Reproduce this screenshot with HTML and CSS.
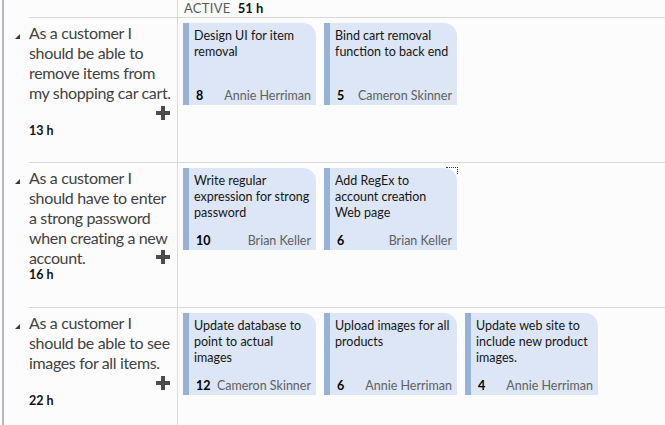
FILE: index.html
```html
<!DOCTYPE html>
<html>
<head>
<meta charset="utf-8">
<link rel="stylesheet" href="styles.css">
</head>
<body>
<div class="board">
  <div class="row header">
    <div class="gutter"></div>
    <div class="story"></div>
    <div class="lane lane-head"><span class="state">ACTIVE</span><span class="total">51 h</span></div>
  </div>

  <div class="row">
    <div class="gutter"><span class="twisty"></span></div>
    <div class="story">
      <div class="story-title">As a customer I should be able to remove items from my shopping car cart.</div>
      <div class="story-add"><svg width="14" height="14" viewBox="0 0 14 14"><path d="M5 0h4v5h5v4H9v5H5V9H0V5h5z" fill="#4b4b4b"/></svg></div>
      <div class="story-hours">13 h</div>
    </div>
    <div class="lane">
      <div class="card"><div class="card-title">Design UI for item removal</div><div class="card-foot"><span class="card-est">8</span><span class="card-owner">Annie Herriman</span></div></div>
      <div class="card"><div class="card-title">Bind cart removal function to back end</div><div class="card-foot"><span class="card-est">5</span><span class="card-owner">Cameron Skinner</span></div></div>
    </div>
  </div>

  <div class="row">
    <div class="gutter"><span class="twisty"></span></div>
    <div class="story">
      <div class="story-title">As a customer I should have to enter a strong password when creating a new account.</div>
      <div class="story-add story-add--inline"><svg width="14" height="14" viewBox="0 0 14 14"><path d="M5 0h4v5h5v4H9v5H5V9H0V5h5z" fill="#4b4b4b"/></svg></div>
      <div class="story-hours">16 h</div>
    </div>
    <div class="lane">
      <div class="card"><div class="card-title">Write regular expression for strong password</div><div class="card-foot"><span class="card-est">10</span><span class="card-owner">Brian Keller</span></div></div>
      <div class="card card--focus"><div class="card-title">Add RegEx to account creation Web page</div><div class="card-foot"><span class="card-est">6</span><span class="card-owner">Brian Keller</span></div></div>
    </div>
  </div>

  <div class="row">
    <div class="gutter"><span class="twisty"></span></div>
    <div class="story">
      <div class="story-title">As a customer I should be able to see images for all items.</div>
      <div class="story-add"><svg width="14" height="14" viewBox="0 0 14 14"><path d="M5 0h4v5h5v4H9v5H5V9H0V5h5z" fill="#4b4b4b"/></svg></div>
      <div class="story-hours">22 h</div>
    </div>
    <div class="lane">
      <div class="card"><div class="card-title">Update database to point to actual images</div><div class="card-foot"><span class="card-est">12</span><span class="card-owner">Cameron Skinner</span></div></div>
      <div class="card"><div class="card-title">Upload images for all products</div><div class="card-foot"><span class="card-est">6</span><span class="card-owner">Annie Herriman</span></div></div>
      <div class="card"><div class="card-title">Update web site to include new product images.</div><div class="card-foot"><span class="card-est">4</span><span class="card-owner">Annie Herriman</span></div></div>
    </div>
  </div>
</div>
</body>
</html>
```

FILE: styles.css
```css
html, body {
  margin: 0;
  padding: 0;
  background: #fcfcfc;
  height: 100%;
  overflow: hidden;
}
body {
  font-family: Lato, "Open Sans", sans-serif;
}
.board {
  margin-left: 2px;
  border-left: 2px solid #b3b8c3;
  min-height: 100%;
  display: flex;
  flex-direction: column;
}
.row {
  display: grid;
  grid-template-columns: 25px 149px 1fr;
  height: 145px;
}
.row.header {
  height: 18px;
}
.row:last-child {
  flex: 1;
}
.twisty {
  display: block;
  width: 0;
  height: 0;
  margin: 16px 0 0 11px;
  border-style: solid;
  border-width: 0 0 5px 5px;
  border-color: transparent transparent #3a3a3a transparent;
}
.story {
  border-right: 1px solid #d9d9d9;
  border-bottom: 1px solid #d9d9d9;
  padding: 5px 0 0 0;
  color: #424242;
}
.lane {
  border-bottom: 1px solid #d9d9d9;
  display: flex;
  gap: 8px;
  padding: 5px 0 0 5px;
  align-items: flex-start;
}
.lane-head {
  padding: 0 0 0 6px;
  align-items: center;
  gap: 7px;
  font-size: 13px;
  line-height: 17px;
}
.state {
  color: #5a5a5a;
  letter-spacing: 0.3px;
}
.total {
  font-weight: bold;
  color: #111;
}
.row:last-child .story,
.row:last-child .lane {
  border-bottom: none;
}
.story-title {
  font-size: 16px;
  line-height: 20px;
  letter-spacing: -0.35px;
  padding-right: 2px;
}
.story-add {
  display: flex;
  justify-content: flex-end;
  align-items: center;
  height: 18px;
  padding-right: 7px;
  margin-top: 1px;
}
.story-add--inline {
  margin-top: -20px;
}
.story-hours {
  font-size: 12.5px;
  font-weight: bold;
  color: #111;
  line-height: 18px;
}
.card {
  position: relative;
  box-sizing: border-box;
  width: 133px;
  height: 82px;
  background: #dce6f6;
  border-left: 6px solid #97b2d8;
  border-top-right-radius: 13px;
  padding: 5px 5px 1px 5px;
  display: flex;
  flex-direction: column;
}
.card-title {
  font-size: 12.5px;
  line-height: 16px;
  color: #151515;
}
.card-foot {
  margin-top: auto;
  display: flex;
  justify-content: space-between;
  align-items: baseline;
  font-size: 12.5px;
  line-height: 16px;
  padding-left: 2px;
}
.card-est {
  font-weight: bold;
  color: #000;
}
.card-owner {
  color: #606060;
}
.card--focus::after {
  content: "";
  position: absolute;
  top: -1px;
  right: -1px;
  width: 11px;
  height: 6px;
  border-top: 1px dotted #333;
  border-right: 1px dotted #333;
}
```
